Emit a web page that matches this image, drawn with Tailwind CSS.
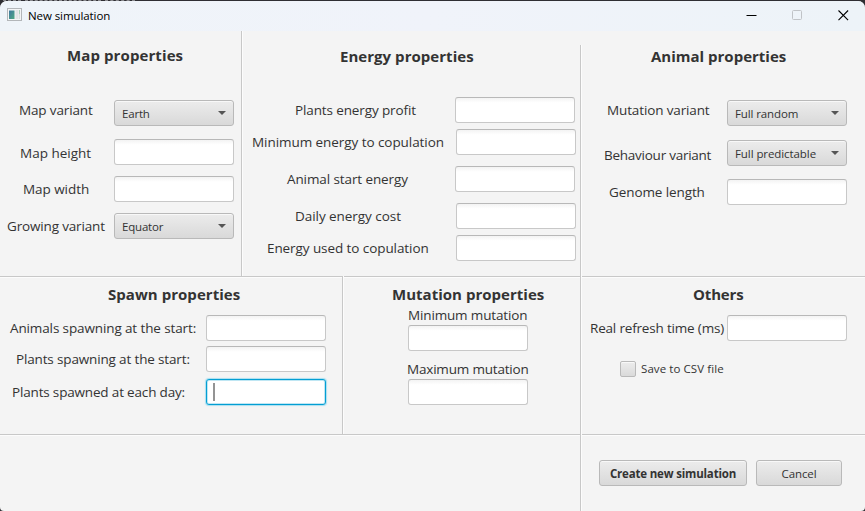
<!DOCTYPE html>
<html lang="en">
<head>
<meta charset="utf-8">
<title>New simulation</title>
<script src="https://cdn.jsdelivr.net/npm/@tailwindcss/browser@4"></script>
</head>
<body class="h-[511px] w-[865px] overflow-hidden bg-[#2f2e33] font-['Open_Sans','Noto_Sans',sans-serif] text-[13.5px] leading-5 whitespace-nowrap text-[#333333]">
<!-- Sliver of the window behind -->
<div class="flex h-px gap-[4px] pl-[3px]"><div class="w-[18px] border-t border-dashed border-[#8a8a8e]"></div><div class="w-[76px] border-t border-dashed border-[#8a8a8e]"></div><div class="w-[30px] border-t border-dashed border-[#8a8a8e]"></div></div>
<div class="flex h-[510px] flex-col overflow-hidden rounded-t-[7px] rounded-b-[4px] bg-[#f4f4f4]">

  <!-- Title bar -->
  <header class="flex h-[30px] shrink-0 items-start bg-linear-to-r from-[#eff4f9] via-[#f0f3fa] to-[#edf3f8] text-[11.5px] text-black">
    <svg class="mt-[7px] ml-[7px] h-[14px] w-[15px]" viewBox="0 0 15 14">
      <defs>
        <linearGradient id="pane" x1="0" y1="0" x2="1" y2="1"><stop offset="0" stop-color="#3f78a0"/><stop offset="1" stop-color="#4fa882"/></linearGradient>
      </defs>
      <rect x=".5" y=".5" width="14" height="12" fill="#f4f5f6" stroke="#b3b6b9"/>
      <rect x="2" y="2.5" width="5.5" height="8.5" fill="url(#pane)"/>
      <rect x="8.5" y="2" width="3" height="9" fill="#e2e4e6"/>
      <rect x="12" y="2" width="1" height="4" fill="#a9cfbb"/>
      <rect x="12" y="6" width="1" height="5" fill="#dadddf"/>
    </svg>
    <div class="mt-[5px] ml-[6px] h-5 tracking-[-0.08px]">New simulation</div>
    <div class="mt-[9px] mr-[16px] ml-auto flex items-start gap-[35px]">
      <svg class="h-[11px] w-[11px]" viewBox="0 0 11 11"><path d="M.5 5.5h10" stroke="#000"/></svg>
      <svg class="h-[11px] w-[11px]" viewBox="0 0 11 11"><rect x=".5" y=".5" width="9" height="9" rx="1" fill="none" stroke="#c0c3c7"/></svg>
      <svg class="h-[11px] w-[11px]" viewBox="0 0 11 11"><path d="M.5 .5l9.6 9.6M10.1 .5L.5 10.1" stroke="#000" stroke-width="1.1"/></svg>
    </div>
  </header>

  <!-- Map, energy and animal properties -->
  <div class="flex h-[245px] shrink-0">
    <section class="w-[241px]">
      <h2 class="mt-[14px] ml-[67px] h-5 text-[15px] font-bold tracking-[0.1px]">Map properties</h2>
      <div class="mt-[35px] flex h-[26px] items-start">
        <div class="ml-[19px] w-[95px] tracking-[-0.14px]">Map variant</div>
        <div class="flex h-[26px] w-[120px] items-center justify-between rounded-[3px] border border-[#b9b9b9] bg-linear-to-b from-[#ececec] to-[#d9d9d9] px-[7px] pt-[2px] text-[11.5px] tracking-[-0.2px] inset-shadow-[0_1px_0_#f8f8f8]">Earth<svg class="-mt-[2px] h-[4px] w-[8px]" viewBox="0 0 8 4"><path d="M0 0h8L4 4z" fill="#555"/></svg></div>
      </div>
      <div class="mt-[13px] flex h-[26px] items-start">
        <div class="mt-1 ml-[20px] w-[94px]">Map height</div>
        <input class="h-[26px] w-[120px] rounded-[3px] border border-[#c8c8c8] border-t-[#b8b8b8] bg-linear-to-b from-[#f3f3f3] to-white to-20%">
      </div>
      <div class="mt-[11px] flex h-[26px] items-start">
        <div class="mt-[3px] ml-[23px] w-[91px] tracking-[-0.05px]">Map width</div>
        <input class="h-[26px] w-[120px] rounded-[3px] border border-[#c8c8c8] border-t-[#b8b8b8] bg-linear-to-b from-[#f3f3f3] to-white to-20%">
      </div>
      <div class="mt-[11px] flex h-[26px] items-start">
        <div class="mt-[3px] ml-[7px] w-[107px] tracking-[-0.16px]">Growing variant</div>
        <div class="flex h-[26px] w-[120px] items-center justify-between rounded-[3px] border border-[#b9b9b9] bg-linear-to-b from-[#ececec] to-[#d9d9d9] px-[7px] pt-[2px] text-[11.5px] tracking-[-0.2px] inset-shadow-[0_1px_0_#f8f8f8]">Equator<svg class="-mt-[2px] h-[4px] w-[8px]" viewBox="0 0 8 4"><path d="M0 0h8L4 4z" fill="#555"/></svg></div>
      </div>
    </section>
    <div class="w-[2px] border-l border-[#c8c8c8] bg-[#fcfcfc]"></div>

    <section class="w-[337px]">
      <h2 class="mt-[15px] ml-[97px] h-5 text-[15px] font-bold tracking-[0.04px]">Energy properties</h2>
      <div class="mt-[31px] flex h-[26px] items-start">
        <div class="mt-[3px] ml-[52px] w-[160px] tracking-[-0.12px]">Plants energy profit</div>
        <input class="h-[26px] w-[120px] rounded-[3px] border border-[#c8c8c8] border-t-[#b8b8b8] bg-linear-to-b from-[#f3f3f3] to-white to-20%">
      </div>
      <div class="mt-[6px] flex h-[26px] items-start">
        <div class="mt-[3px] ml-[9px] w-[204px] tracking-[-0.06px]">Minimum energy to copulation</div>
        <input class="h-[26px] w-[120px] rounded-[3px] border border-[#c8c8c8] border-t-[#b8b8b8] bg-linear-to-b from-[#f3f3f3] to-white to-20%">
      </div>
      <div class="mt-[11px] flex h-[26px] items-start">
        <div class="mt-[3px] ml-[44px] w-[168px] tracking-[-0.1px]">Animal start energy</div>
        <input class="h-[26px] w-[120px] rounded-[3px] border border-[#c8c8c8] border-t-[#b8b8b8] bg-linear-to-b from-[#f3f3f3] to-white to-20%">
      </div>
      <div class="mt-[11px] flex h-[26px] items-start">
        <div class="mt-[3px] ml-[52px] w-[161px] tracking-[-0.05px]">Daily energy cost</div>
        <input class="h-[26px] w-[120px] rounded-[3px] border border-[#c8c8c8] border-t-[#b8b8b8] bg-linear-to-b from-[#f3f3f3] to-white to-20%">
      </div>
      <div class="mt-[6px] flex h-[26px] items-start">
        <div class="mt-[3px] ml-[24px] w-[189px] tracking-[-0.08px]">Energy used to copulation</div>
        <input class="h-[26px] w-[120px] rounded-[3px] border border-[#c8c8c8] border-t-[#b8b8b8] bg-linear-to-b from-[#f3f3f3] to-white to-20%">
      </div>
    </section>
    <div class="mt-[14px] w-[2px] border-l border-[#c8c8c8] bg-[#fcfcfc]"></div>

    <section class="w-[283px]">
      <h2 class="mt-[15px] ml-[69px] h-5 text-[15px] font-bold">Animal properties</h2>
      <div class="mt-[34px] flex h-[26px] items-start">
        <div class="ml-[25px] w-[120px] tracking-[-0.13px]">Mutation variant</div>
        <div class="flex h-[26px] w-[120px] items-center justify-between rounded-[3px] border border-[#b9b9b9] bg-linear-to-b from-[#ececec] to-[#d9d9d9] px-[7px] pt-[2px] text-[11.5px] tracking-[-0.12px] inset-shadow-[0_1px_0_#f8f8f8]">Full random<svg class="-mt-[2px] h-[4px] w-[8px]" viewBox="0 0 8 4"><path d="M0 0h8L4 4z" fill="#555"/></svg></div>
      </div>
      <div class="mt-[14px] flex h-[26px] items-start">
        <div class="mt-[5px] ml-[22px] w-[123px] tracking-[-0.25px]">Behaviour variant</div>
        <div class="flex h-[26px] w-[120px] items-center justify-between rounded-[3px] border border-[#b9b9b9] bg-linear-to-b from-[#ececec] to-[#d9d9d9] px-[7px] pt-[2px] text-[11.5px] tracking-[-0.08px] inset-shadow-[0_1px_0_#f8f8f8]">Full predictable<svg class="-mt-[2px] h-[4px] w-[8px]" viewBox="0 0 8 4"><path d="M0 0h8L4 4z" fill="#555"/></svg></div>
      </div>
      <div class="mt-[13px] flex h-[26px] items-start">
        <div class="mt-[3px] ml-[27px] w-[118px] tracking-[-0.1px]">Genome length</div>
        <input class="h-[26px] w-[120px] rounded-[3px] border border-[#c8c8c8] border-t-[#b8b8b8] bg-linear-to-b from-[#f3f3f3] to-white to-20%">
      </div>
    </section>
  </div>

  <!-- Spawn, mutation and other properties -->
  <div class="flex h-[158px] shrink-0">
    <div class="flex w-[580px]">
      <section class="w-[342px] border-t border-[#c8c8c8] inset-shadow-[0_1px_0_#fcfcfc]">
        <h2 class="mt-[7px] ml-[108px] h-5 text-[15px] font-bold tracking-[0.04px]">Spawn properties</h2>
        <div class="mt-[11px] flex h-[26px] items-start">
          <div class="mt-[3px] ml-[10px] w-[196px] tracking-[-0.12px]">Animals spawning at the start:</div>
          <input class="h-[26px] w-[120px] rounded-[3px] border border-[#c8c8c8] border-t-[#b8b8b8] bg-linear-to-b from-[#f3f3f3] to-white to-20%">
        </div>
        <div class="mt-[5px] flex h-[26px] items-start">
          <div class="mt-[3px] ml-[16px] w-[190px] tracking-[-0.15px]">Plants spawning at the start:</div>
          <input class="h-[26px] w-[120px] rounded-[3px] border border-[#c8c8c8] border-t-[#b8b8b8] bg-linear-to-b from-[#f3f3f3] to-white to-20%">
        </div>
        <div class="mt-[7px] flex h-[26px] items-start">
          <div class="mt-[3px] ml-[12px] w-[194px] tracking-[-0.17px]">Plants spawned at each day:</div>
          <!-- Focused field with its text cursor -->
          <div class="flex h-[26px] w-[120px] items-center rounded-[3px] border border-[#039ed3] bg-white pl-[6px] shadow-[0_0_1px_1px_#a9dff0] inset-shadow-[0_0_0_1px_#bfe6f3]"><div class="h-[18px] w-[2px] bg-[#949494]"></div></div>
        </div>
      </section>
      <div class="w-[2px] border-l border-[#c8c8c8] bg-[#fcfcfc]"></div>
      <section class="w-[236px] border-t border-[#c8c8c8] inset-shadow-[0_1px_0_#fcfcfc]">
        <h2 class="mt-[7px] ml-[48px] h-5 text-[15px] font-bold tracking-[0.02px]">Mutation properties</h2>
        <div class="mt-px ml-[64px] h-5 tracking-[-0.15px]">Minimum mutation</div>
        <input class="ml-[64px] block h-[26px] w-[120px] rounded-[3px] border border-[#c8c8c8] border-t-[#b8b8b8] bg-linear-to-b from-[#f3f3f3] to-white to-20%">
        <div class="mt-[8px] ml-[63px] h-5 tracking-[-0.19px]">Maximum mutation</div>
        <input class="ml-[64px] block h-[26px] w-[120px] rounded-[3px] border border-[#c8c8c8] border-t-[#b8b8b8] bg-linear-to-b from-[#f3f3f3] to-white to-20%">
      </section>
    </div>
    <div class="w-[2px] border-l border-[#c8c8c8] bg-[#fcfcfc]"></div>
    <section class="w-[283px] border-t border-[#c8c8c8] inset-shadow-[0_1px_0_#fcfcfc]">
      <h2 class="mt-[7px] ml-[111px] h-5 text-[15px] font-bold tracking-[-0.15px]">Others</h2>
      <div class="mt-[11px] flex h-[26px] items-start">
        <div class="mt-[3px] ml-[8px] w-[137px] tracking-[-0.18px]">Real refresh time (ms)</div>
        <input class="h-[26px] w-[120px] rounded-[3px] border border-[#c8c8c8] border-t-[#b8b8b8] bg-linear-to-b from-[#f3f3f3] to-white to-20%">
      </div>
      <div class="mt-[18px] ml-[38px] flex h-5 items-center gap-[5px] text-[11.5px] tracking-[0.08px]">
        <div class="h-4 w-4 rounded-[2px] border border-[#b9b9b9] bg-linear-to-b from-[#ececec] to-[#dadada] inset-shadow-[0_1px_0_#f8f8f8]"></div>
        <div>Save to CSV file</div>
      </div>
    </section>
  </div>

  <!-- Dialog buttons -->
  <footer class="flex h-[77px] shrink-0">
    <div class="w-[580px] border-t border-[#c8c8c8] inset-shadow-[0_1px_0_#fcfcfc]"></div>
    <div class="w-[2px] border-l border-[#c8c8c8] bg-[#fcfcfc]"></div>
    <div class="flex w-[283px] gap-[9px] border-t border-[#c8c8c8] pt-[25px] pl-[17px] text-[11.5px] inset-shadow-[0_1px_0_#fcfcfc]">
      <button class="h-[26px] w-[148px] rounded-[3px] border border-[#b9b9b9] bg-linear-to-b from-[#ececec] to-[#d9d9d9] pt-[2px] font-bold tracking-[-0.18px] inset-shadow-[0_1px_0_#f8f8f8]">Create new simulation</button>
      <button class="h-[26px] w-[86px] rounded-[3px] border border-[#b9b9b9] bg-linear-to-b from-[#ececec] to-[#d9d9d9] pt-[2px] tracking-[-0.1px] inset-shadow-[0_1px_0_#f8f8f8]">Cancel</button>
    </div>
  </footer>
</div>
</body>
</html>
